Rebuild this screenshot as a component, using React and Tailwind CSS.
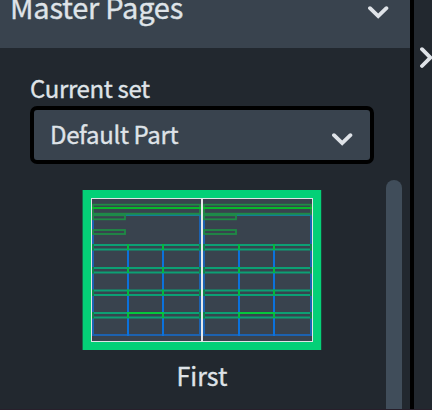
const gutters = [244, 267, 289.5, 312];

function PageGrid({ x }) {
  return (
    <g transform={`translate(${x} 0)`} fill="none">
      <rect x="1" y="215" width="107" height="120" stroke="#1c62b0" strokeWidth="2" />
      <path d="M36 244v92M71 244v92" stroke="#0b72dc" strokeWidth="2" />
      <path d="M0 215h109" stroke="#147f93" strokeWidth="2" />
      <rect x="1" y="204.7" width="107" height="9" stroke="#1f8b45" strokeWidth="1.8" />
      <path d="M0 208h109" stroke="#08b82b" strokeWidth="2" />
      <rect x="1" y="215.3" width="32" height="4" stroke="#1f8b45" strokeWidth="1.8" />
      <rect x="1" y="230" width="32" height="4" stroke="#1f8b45" strokeWidth="1.8" />
      {gutters.map((y) => (
        <g key={y}>
          <path d={`M0 ${y + 1}h109M0 ${y + 5.5}h109`} stroke="#0ca074" strokeWidth="2" />
          <path d={`M1 ${y}v6.5M108 ${y}v6.5`} stroke="#0b854e" strokeWidth="2" />
          <path d={`M36 ${y}v6M71 ${y}v6`} stroke="#04b83f" strokeWidth="2" />
        </g>
      ))}
      <path d="M35 313h37" stroke="#04c83d" strokeWidth="2" />
    </g>
  );
}

function Chevron({ className, d = "M2 2.2 10.2 10.2 18.4 2.2" }) {
  return (
    <svg className={className} fill="none" stroke="#dfe3e8" strokeWidth="3.8" strokeLinecap="round">
      <path d={d} />
    </svg>
  );
}

export default function App() {
  return (
    <div className="flex h-[410px] w-[432px] overflow-hidden border-b border-[#281f2b] bg-[#22282f] font-['Noto_Sans_CJK_SC',sans-serif] font-normal text-[#dfe3e8] [-webkit-text-stroke:0.35px_#dfe3e8]">
      <main className="flex h-[409px] w-[410px] shrink-0 flex-col">
        <header className="flex h-12 shrink-0 items-start justify-between bg-[#39434e] pr-[21px] pl-2.5">
          <h1 className="-mt-[12px] text-[29px] leading-[36px] tracking-[-0.25px] whitespace-nowrap">Master Pages</h1>
          <Chevron className="mt-[6px] h-[14px] w-[21px]" />
        </header>
        <div className="flex min-h-0 flex-1">
          <section className="flex w-[386px] shrink-0 flex-col">
            <label className="mt-[23px] mb-[2px] ml-[30px] h-[33px] text-[24px] leading-[33px] tracking-[-0.35px] whitespace-nowrap">Current set</label>
            <button className="ml-[30px] flex h-[58px] w-[344px] shrink-0 items-center justify-between rounded-[7px] border-4 border-black bg-[#39434e] pr-[17px] pl-4 text-left">
              <span className="-mt-[2px] text-[24px] leading-[34px] tracking-[-0.35px] whitespace-nowrap">Default Part</span>
              <Chevron className="mt-[10px] h-[14px] w-[21px]" />
            </button>
            <figure className="mt-[26px] ml-[82px] flex w-[240px] flex-col items-center">
              <svg className="h-[160px] w-[240px]" viewBox="82 190 240 160">
                <rect x="82.6" y="190" width="238.6" height="160" fill="#04d077" />
                <rect x="91.5" y="198.5" width="221" height="143" fill="#39434e" stroke="#e1e4e6" />
                <PageGrid x={92} />
                <PageGrid x={203} />
                <path d="M202 198v144" stroke="#e6e8ea" strokeWidth="2" />
              </svg>
              <figcaption className="mt-[7px] text-[25px] leading-[36px]">First</figcaption>
            </figure>
          </section>
          <div className="mt-[132px] w-4 shrink-0 rounded-t-full bg-[#404d5a]" />
        </div>
      </main>
      <div className="w-1 shrink-0 bg-black" />
      <aside className="w-[18px] shrink-0 pt-[46px] pl-[6px]">
        <Chevron className="h-[23px] w-[12px]" d="M2 3.2 10.4 11.6 2 20" />
      </aside>
    </div>
  );
}
